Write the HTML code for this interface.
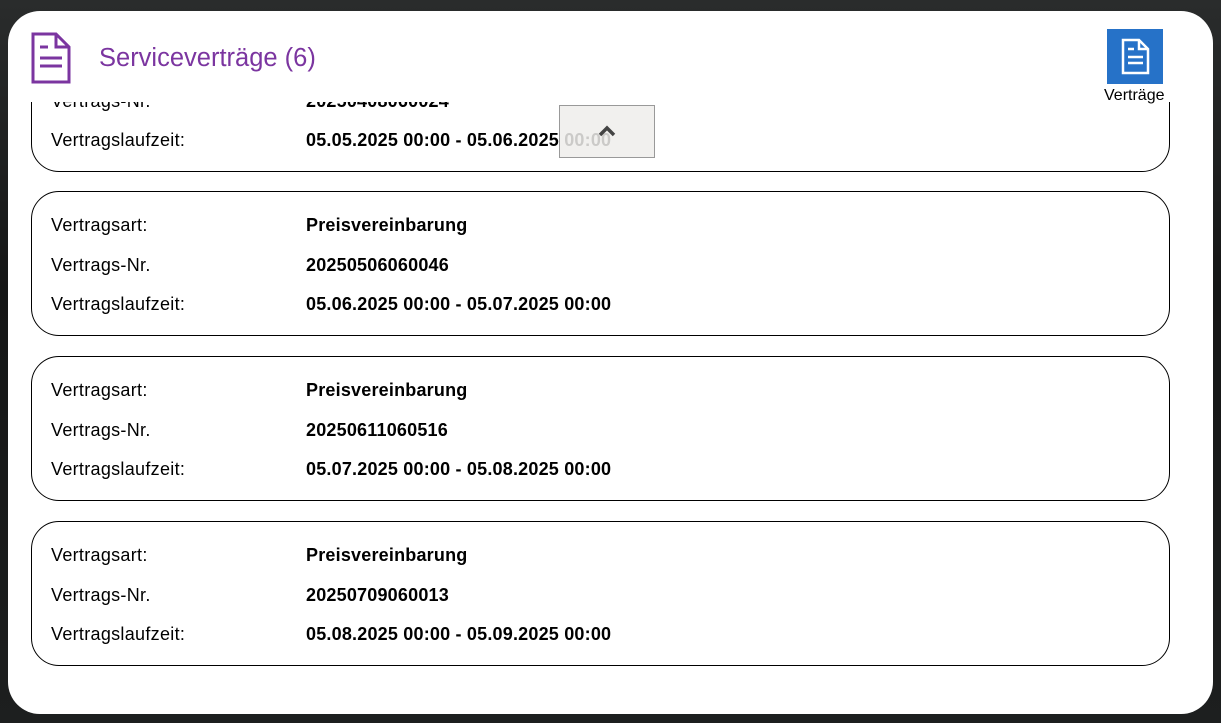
<!DOCTYPE html>
<html><head><meta charset="utf-8"><style>
html,body{margin:0;padding:0;width:1221px;height:723px;overflow:hidden;background:#1a1c1d;font-family:"Liberation Sans",sans-serif;}
.bg{position:absolute;inset:0;background:linear-gradient(180deg,#2a2c2c 0%,#151616 40%,#1d1f1f 100%);}
.panel{position:absolute;left:8px;top:11px;width:1205px;height:703px;background:#fff;border-radius:32px;overflow:hidden;}
.title{position:absolute;left:91px;top:33px;font-size:25.5px;color:#7b35a0;}
.scroll{position:absolute;left:0;top:91px;width:1205px;height:612px;overflow:hidden;}
.card{position:absolute;left:23px;width:1137px;height:143px;border:1px solid #000;border-radius:28px;}
.row{position:absolute;font-size:18px;color:#000;}
.l{left:19px;letter-spacing:0.3px}.v{left:274px;font-weight:bold;letter-spacing:0.2px}
.btn{position:absolute;left:551px;top:94px;width:94px;height:51px;background:rgba(238,237,235,0.85);border:1px solid #999;}
.vt{position:absolute;left:1099px;top:18px;width:56px;height:55px;background:#2672c8;}
.vtl{position:absolute;left:1096px;top:76px;font-size:16px;color:#000;}
</style></head><body>
<div class="bg"></div>
<div class="panel">
  <svg style="position:absolute;left:23px;top:21px" width="40" height="52" viewBox="0 0 40 52">
    <path d="M2 2 H25 L38 15 V50 H2 Z" fill="none" stroke="#7b35a0" stroke-width="3"/>
    <path d="M25 2 V15 H38" fill="none" stroke="#7b35a0" stroke-width="3"/>
    <path d="M9 15 H17 M9 26 H31 M9 34 H31" stroke="#7b35a0" stroke-width="3"/>
  </svg>
  <div class="title">Serviceverträge (6)</div>
  <div class="vt"><svg style="position:absolute;left:14px;top:9px" width="29" height="37" viewBox="0 0 29 37">
    <path d="M2 2 H18 L27 11 V35 H2 Z" fill="none" stroke="#fff" stroke-width="2.5"/>
    <path d="M18 2 V11 H27" fill="none" stroke="#fff" stroke-width="2.5"/>
    <path d="M7 11 H13 M7 19 H22 M7 25 H22" stroke="#fff" stroke-width="2.5"/>
  </svg></div>
  <div class="vtl">Verträge</div>
  <div class="scroll">
    <div class="card" style="top:-75px">
      <div class="row l" style="top:63px">Vertrags-Nr.</div>
      <div class="row v" style="top:63px">20250408060024</div>
      <div class="row l" style="top:102px">Vertragslaufzeit:</div>
      <div class="row v" style="top:102px">05.05.2025 00:00 - 05.06.2025 00:00</div>
    </div>
    <div class="card" style="top:89px">
      <div class="row l" style="top:23px">Vertragsart:</div><div class="row v" style="top:23px">Preisvereinbarung</div>
      <div class="row l" style="top:63px">Vertrags-Nr.</div><div class="row v" style="top:63px">20250506060046</div>
      <div class="row l" style="top:102px">Vertragslaufzeit:</div><div class="row v" style="top:102px">05.06.2025 00:00 - 05.07.2025 00:00</div>
    </div>
    <div class="card" style="top:254px">
      <div class="row l" style="top:23px">Vertragsart:</div><div class="row v" style="top:23px">Preisvereinbarung</div>
      <div class="row l" style="top:63px">Vertrags-Nr.</div><div class="row v" style="top:63px">20250611060516</div>
      <div class="row l" style="top:102px">Vertragslaufzeit:</div><div class="row v" style="top:102px">05.07.2025 00:00 - 05.08.2025 00:00</div>
    </div>
    <div class="card" style="top:419px">
      <div class="row l" style="top:23px">Vertragsart:</div><div class="row v" style="top:23px">Preisvereinbarung</div>
      <div class="row l" style="top:63px">Vertrags-Nr.</div><div class="row v" style="top:63px">20250709060013</div>
      <div class="row l" style="top:102px">Vertragslaufzeit:</div><div class="row v" style="top:102px">05.08.2025 00:00 - 05.09.2025 00:00</div>
    </div>
  </div>
  <div class="btn"><svg style="position:absolute;left:38px;top:19px" width="18" height="12" viewBox="0 0 18 12"><path d="M2 10 L9 3 L16 10" fill="none" stroke="#444" stroke-width="3.5"/></svg></div>
</div>
</body></html>
